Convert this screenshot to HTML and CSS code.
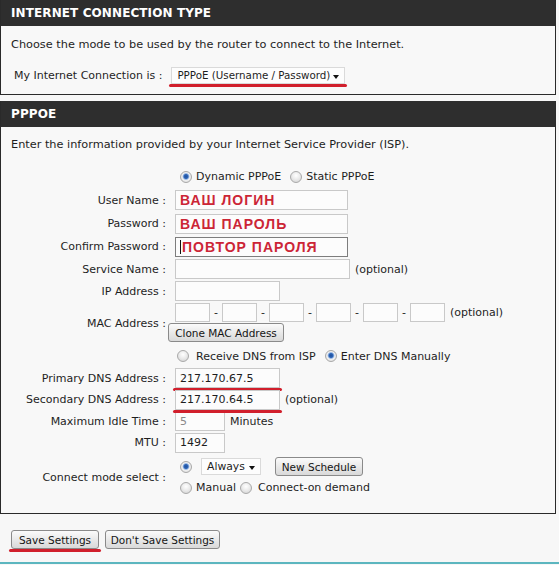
FILE: index.html
```html
<!DOCTYPE html>
<html>
<head>
<meta charset="utf-8">
<link rel="stylesheet" href="styles.css">
</head>
<body>
<div class="page">
  <section class="box box1">
    <h2 class="hdr">INTERNET CONNECTION TYPE</h2>
    <div class="body body1">
      <p class="intro">Choose the mode to be used by the router to connect to the Internet.</p>
      <div class="conn-row">
        <span class="conn-lbl">My Internet Connection is :</span>
        <span class="mark"><span class="select sel-wide">PPPoE (Username / Password)<i class="arrow"></i></span></span>
      </div>
    </div>
  </section>

  <section class="box box2">
    <h2 class="hdr">PPPOE</h2>
    <div class="body body2">
      <p class="intro">Enter the information provided by your Internet Service Provider (ISP).</p>
      <div class="form">
        <span></span>
        <div class="cell"><span class="radio on r1"></span><span class="rtxt">Dynamic PPPoE</span><span class="radio"></span><span class="rtxt">Static PPPoE</span></div>

        <span class="lbl">User Name :</span>
        <div class="cell"><span class="field f-long red">ВАШ ЛОГИН</span></div>

        <span class="lbl">Password :</span>
        <div class="cell"><span class="field f-long red">ВАШ ПАРОЛЬ</span></div>

        <span class="lbl">Confirm Password :</span>
        <div class="cell"><span class="field f-long red focus"><i class="caret"></i>ПОВТОР ПАРОЛЯ</span></div>

        <span class="lbl">Service Name :</span>
        <div class="cell"><span class="field f-long2"></span><span class="note">(optional)</span></div>

        <span class="lbl">IP Address :</span>
        <div class="cell"><span class="field f-mid"></span></div>

        <span class="lbl">MAC Address :</span>
        <div class="cell mac">
          <div class="mac-row">
            <span class="field f-mac"></span><span class="dash">-</span>
            <span class="field f-mac"></span><span class="dash">-</span>
            <span class="field f-mac"></span><span class="dash">-</span>
            <span class="field f-mac"></span><span class="dash">-</span>
            <span class="field f-mac"></span><span class="dash">-</span>
            <span class="field f-mac"></span><span class="note">(optional)</span>
          </div>
          <span class="btn btn-clone">Clone MAC Address</span>
        </div>

        <span></span>
        <div class="cell"><span class="radio r0"></span><span class="rtxt">Receive DNS from ISP</span><span class="radio on r2"></span><span class="rtxt">Enter DNS Manually</span></div>

        <span class="lbl">Primary DNS Address :</span>
        <div class="cell"><span class="mark"><span class="field f-mid">217.170.67.5</span></span></div>

        <span class="lbl">Secondary DNS Address :</span>
        <div class="cell"><span class="mark"><span class="field f-mid">217.170.64.5</span></span><span class="note">(optional)</span></div>

        <span class="lbl">Maximum Idle Time :</span>
        <div class="cell"><span class="field f-short grey">5</span><span class="note">Minutes</span></div>

        <span class="lbl">MTU :</span>
        <div class="cell"><span class="field f-short">1492</span></div>

        <span class="lbl lbl-conn">Connect mode select :</span>
        <div class="cell conn">
          <div class="sub"><span class="radio on r1"></span><span class="select sel-always">Always<i class="arrow"></i></span><span class="btn btn-sched">New Schedule</span></div>
          <div class="sub"><span class="radio r1"></span><span class="rtxt">Manual</span><span class="radio r3"></span><span class="rtxt">Connect-on demand</span></div>
        </div>
      </div>
    </div>
  </section>

  <div class="actions">
    <span class="mark"><span class="btn btn-save">Save Settings</span></span>
    <span class="btn btn-nosave">Don't Save Settings</span>
  </div>
</div>
</body>
</html>
```
FILE: styles.css
```css
html, body {
  margin: 0;
  padding: 0;
  background: #f7f7f7;
}
body {
  font-family: "DejaVu Sans", Tahoma, sans-serif;
  font-size: 11.3px;
  color: #1e1e1e;
}
.page {
  width: 559px;
}
.box {
  width: 556px;
  box-sizing: border-box;
  border: 1px solid #2a2a2a;
  border-top: 0;
  background: #f8f8f8;
}
.box2 {
  margin-top: 6px;
}
.hdr {
  margin: 0;
  height: 26px;
  line-height: 27px;
  background: #2e2e2e;
  color: #fff;
  font-size: 12px;
  font-weight: bold;
  padding-left: 10px;
  letter-spacing: 0.1px;
}
.body {
  padding: 12px 10px 9px 10px;
}
.intro {
  margin: 0;
  line-height: 14px;
}
.body2 {
  padding: 11px 10px 14px 10px;
}
.conn-row {
  margin-top: 13px;
  height: 20px;
  display: flex;
  align-items: center;
  padding-left: 3px;
  font-size: 11px;
}
.conn-lbl {
  margin-right: 9px;
}
.mark {
  position: relative;
  display: inline-flex;
}
.mark::after {
  content: "";
  position: absolute;
  left: -2px;
  right: -2px;
  bottom: -3px;
  height: 3px;
  background: #d11f2c;
  border-radius: 2px;
}
.select {
  display: inline-flex;
  align-items: center;
  box-sizing: border-box;
  height: 17px;
  border: 1px solid #dadada;
  background: #fdfdfd;
  padding-left: 5px;
  font-size: 10.3px;
  position: relative;
  white-space: nowrap;
}
.sel-wide {
  width: 174px;
}
.sel-always {
  width: 60px;
  margin-left: 5px;
  font-size: 10.8px;
}
.arrow {
  position: absolute;
  right: 5px;
  top: 7px;
  width: 0;
  height: 0;
  border-left: 3.5px solid transparent;
  border-right: 3.5px solid transparent;
  border-top: 4px solid #111;
}
.form {
  margin-top: 13px;
  display: grid;
  grid-template-columns: 155px 1fr;
  column-gap: 9px;
  grid-template-rows: 23px 24px 23px 23px 22px 22px 43px 22px 22px 21px 22px 21px 46px;
  font-size: 11px;
}
.lbl {
  justify-self: end;
  align-self: center;
  white-space: nowrap;
}
.cell {
  display: flex;
  align-items: center;
  white-space: nowrap;
}
.field {
  display: inline-flex;
  align-items: center;
  box-sizing: border-box;
  height: 20px;
  border: 1px solid #c9c9c9;
  background: #fcfcfc;
  padding-left: 4px;
  white-space: nowrap;
}
.f-long { width: 173px; }
.f-long2 { width: 175px; }
.f-mid { width: 105px; }
.f-short { width: 50px; }
.f-mac { width: 35px; height: 19px; }
.grey { color: #8a8a8a; }
.red {
  font-family: "Liberation Sans", Arial, sans-serif;
  font-weight: bold;
  font-size: 14px;
  color: #cc2536;
  letter-spacing: 1px;
}
.focus {
  border-color: #7d7d7d;
}
.caret {
  display: inline-block;
  width: 1px;
  height: 14px;
  background: #111;
  margin-right: 1px;
}
.note {
  margin-left: 5px;
}
.radio {
  display: inline-block;
  width: 12px;
  height: 12px;
  box-sizing: border-box;
  border-radius: 50%;
  border: 1px solid #a9a9a9;
  background: radial-gradient(circle at 50% 35%, #ffffff 0, #ececec 45%, #cfcfcf 100%);
  margin-left: 9px;
  margin-right: 4px;
  flex: none;
}
.radio.on {
  background: radial-gradient(circle at 50% 45%, #1f4f9a 0, #2f66b8 2px, #9fbde6 3px, #f1f1f1 3.8px, #d3d3d3 100%);
}
.r1 { margin-left: 5px; }
.r0 { margin-left: 2px; margin-right: 7px; }
.r2 { margin-left: 9px; margin-right: 4px; }
.r3 { margin-left: 4px; margin-right: 6px; }
.mac {
  flex-direction: column;
  align-items: flex-start;
  justify-content: flex-start;
  padding-top: 1px;
  gap: 1px;
}
.mac-row {
  display: flex;
  align-items: center;
}
.dash {
  width: 12px;
  text-align: center;
}
.btn {
  display: inline-flex;
  align-items: center;
  justify-content: center;
  box-sizing: border-box;
  height: 19px;
  border: 1px solid #8a8a8a;
  border-radius: 3px;
  background: linear-gradient(#fbfbfb, #e6e6e6 60%, #d9d9d9);
  color: #151515;
  white-space: nowrap;
  font-size: 10.5px;
}
.btn-clone {
  width: 116px;
  margin-left: -7px;
}
.btn-sched {
  width: 88px;
  height: 19px;
  margin-left: 14px;
}
.conn {
  flex-direction: column;
  align-items: flex-start;
  justify-content: flex-start;
  padding-top: 3px;
}
.sub {
  display: flex;
  align-items: center;
  height: 21px;
}
.lbl-conn {
  align-self: center;
  padding-top: 2px;
}
.actions {
  display: flex;
  gap: 6px;
  padding: 16px 0 13px 11px;
  border-bottom: 2px solid #5cb6bf;
}
.btn-save { width: 88px; }
.btn-nosave { width: 115px; }
```
